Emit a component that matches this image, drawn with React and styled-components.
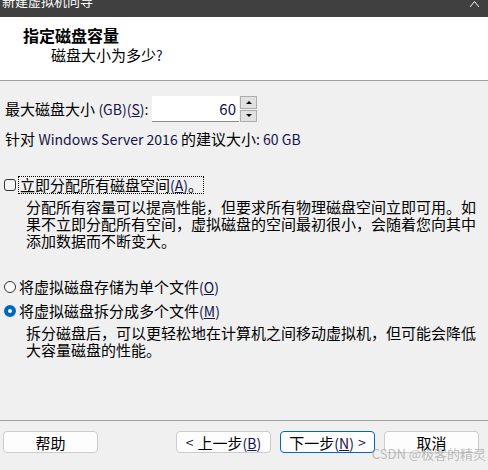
import React from 'react'
import styled, { createGlobalStyle } from 'styled-components'

const GlobalStyle = createGlobalStyle`
  html, body {
    margin: 0;
    padding: 0;
    background: #f0f0f0;
  }
  body {
    font-family: "Noto Sans CJK SC", "Noto Sans", sans-serif;
    color: #000;
  }
`

const Window = styled.div`
  position: relative;
  width: 488px;
  height: 470px;
  display: flex;
  flex-direction: column;
  overflow: hidden;
  background: #f0f0f0;
`

const TitleBar = styled.div`
  height: 17px;
  flex: none;
  background: #404040;
  display: flex;
  justify-content: space-between;
  align-items: flex-start;
  overflow: hidden;
`

const TitleText = styled.span`
  color: #fff;
  font-size: 13px;
  line-height: 17px;
  margin: -8px 0 0 2px;
`

const CloseIcon = styled.svg`
  margin: 0 9px 0 0;
  flex: none;
`

const Header = styled.div`
  height: 64px;
  flex: none;
  background: #fff;
  border-bottom: 1px solid #a0a0a0;
  box-sizing: border-box;
  padding: 8px 0 0 23px;
`

const HeaderTitle = styled.div`
  font-size: 16px;
  font-weight: 700;
  line-height: 20px;
`

const HeaderSub = styled.div`
  font-size: 15px;
  line-height: 18px;
  margin: 1px 0 0 28px;
`

const Body = styled.div`
  flex: 1;
  padding: 15px 0 0 5px;
  font-size: 15px;
  line-height: 17px;
`

const Row = styled.div`
  display: flex;
  align-items: center;
  gap: ${p => p.gap || 0}px;
  margin-top: ${p => p.top || 0}px;
`

const Latin = styled.span`
  color: #14144a;
  font-size: 14px;
`

const SizeLabel = styled.span`
  width: 147px;
`

const SpinBox = styled.div`
  display: flex;
  height: 26px;
`

const SpinInput = styled.div`
  width: 87px;
  box-sizing: border-box;
  background: #fff;
  border-bottom: 1px solid #8a8a8a;
  text-align: right;
  padding: 4px 3px 0 0;
  font-size: 15px;
  line-height: 18px;
  color: #10104a;
`

const SpinButtons = styled.div`
  display: flex;
  flex-direction: column;
  gap: 1px;
  width: 17px;
  margin-left: 1px;
`

const SpinButton = styled.div`
  flex: 1;
  border: 1px solid #adadad;
  background: #e1e1e1;
  display: flex;
  align-items: center;
  justify-content: center;
`

const Arrow = styled.div`
  width: 0;
  height: 0;
  border-left: 3px solid transparent;
  border-right: 3px solid transparent;
  ${p => p.down ? 'border-top: 3px solid #000;' : 'border-bottom: 3px solid #000;'}
`

const Hint = styled.div`
  margin-top: 8px;
`

const CheckBox = styled.div`
  width: 10px;
  height: 10px;
  border: 1px solid #333;
  border-radius: 3px;
  background: #f6f6f6;
  margin: 0 1px 0 -1px;
  flex: none;
`

const FocusLabel = styled.span`
  outline: 1px dotted #000;
  outline-offset: 0;
  padding: 0 0 0 1px;
  line-height: 16px;
`

const Description = styled.div`
  margin: ${p => p.top || 4}px 8px 0 21px;
  line-height: 17px;
`

const Radio = styled.div`
  width: ${p => p.checked ? 12 : 10}px;
  height: ${p => p.checked ? 12 : 10}px;
  border-radius: 50%;
  flex: none;
  margin: 0 1px 0 -1px;
  background: ${p => p.checked ? '#fff' : '#fdfdfd'};
  border: ${p => p.checked ? '4px solid #0067c0' : '1px solid #333'};
  box-sizing: ${p => p.checked ? 'border-box' : 'content-box'};
`

const Footer = styled.div`
  height: 39px;
  flex: none;
  border-top: 1px solid #a0a0a0;
  display: flex;
  align-items: flex-start;
  padding: 10px 8px 0 3px;
`

const Button = styled.div`
  width: 93px;
  height: 20px;
  box-sizing: content-box;
  border: 1px solid ${p => p.primary ? '#0067c0' : '#cccccc'};
  border-radius: 4px;
  background: #fdfdfd;
  display: flex;
  align-items: center;
  justify-content: center;
  gap: ${p => p.gap || 0}px;
  font-size: 15px;
  margin-left: ${p => p.left || 0}px;
`

const Key = styled.span`
  color: #14144a;
  font-size: 14px;
`

const Watermark = styled.div`
  position: absolute;
  right: 2px;
  bottom: 7px;
  font-size: 13px;
  color: rgba(140, 140, 140, 0.55);
  pointer-events: none;
`

export default function App() {
  return (
    <Window>
      <GlobalStyle />
      <TitleBar>
        <TitleText>新建虚拟机向导</TitleText>
        <CloseIcon width="9" height="7" viewBox="0 0 9 7">
          <path d="M0 7 L4.5 1.5 L9 7" stroke="#fff" strokeWidth="1" fill="none" />
        </CloseIcon>
      </TitleBar>
      <Header>
        <HeaderTitle>指定磁盘容量</HeaderTitle>
        <HeaderSub>磁盘大小为多少<Latin>?</Latin></HeaderSub>
      </Header>
      <Body>
        <Row>
          <SizeLabel>最大磁盘大小 <Latin>(GB)(<u>S</u>):</Latin></SizeLabel>
          <SpinBox>
            <SpinInput>60</SpinInput>
            <SpinButtons>
              <SpinButton><Arrow /></SpinButton>
              <SpinButton><Arrow down /></SpinButton>
            </SpinButtons>
          </SpinBox>
        </Row>
        <Hint>针对 <Latin>Windows Server 2016</Latin> 的建议大小<Latin>: 60 GB</Latin></Hint>
        <Row top={29} gap={2}>
          <CheckBox />
          <FocusLabel>立即分配所有磁盘空间<Key>(<u>A</u>)</Key>。</FocusLabel>
        </Row>
        <Description top={5}>
          分配所有容量可以提高性能，但要求所有物理磁盘空间立即可用。如果不立即分配所有空间，虚拟磁盘的空间最初很小，会随着您向其中添加数据而不断变大。
        </Description>
        <Row top={29} gap={2}>
          <Radio />
          <span>将虚拟磁盘存储为单个文件<Key>(<u>O</u>)</Key></span>
        </Row>
        <Row top={6} gap={2}>
          <Radio checked />
          <span>将虚拟磁盘拆分成多个文件<Key>(<u>M</u>)</Key></span>
        </Row>
        <Description top={4}>
          拆分磁盘后，可以更轻松地在计算机之间移动虚拟机，但可能会降低大容量磁盘的性能。
        </Description>
      </Body>
      <Footer>
        <Button>帮助</Button>
        <Button left={78} gap={4}><Key>&lt;</Key><span>上一步<Key>(<u>B</u>)</Key></span></Button>
        <Button primary left={9} gap={4}><span>下一步<Key>(<u>N</u>)</Key></span><Key>&gt;</Key></Button>
        <Button left={9}>取消</Button>
      </Footer>
      <Watermark>CSDN @极客的精灵</Watermark>
    </Window>
  )
}
